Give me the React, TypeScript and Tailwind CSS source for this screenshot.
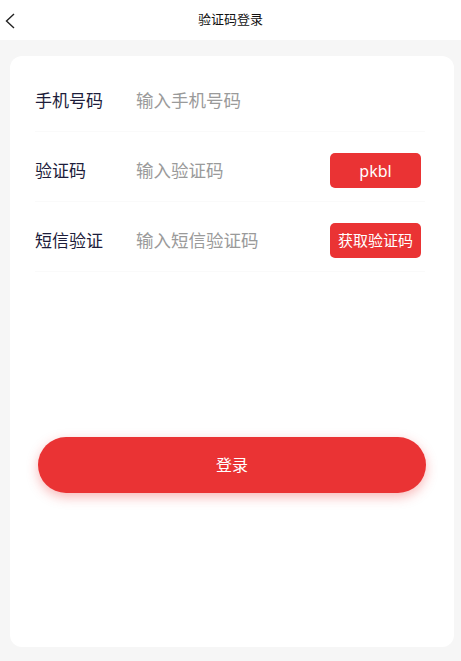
const font = { fontFamily: '"Noto Sans", "Noto Sans CJK SC", sans-serif' };

const Row = ({
  label,
  placeholder,
  action,
}: {
  label: string;
  placeholder: string;
  action?: React.ReactNode;
}) => (
  <div className="flex items-center h-[70px] pt-[8px] border-b border-[#fafafa]">
    <span className="w-[101px] shrink-0 text-[17px] text-[#1d1d3b]">{label}</span>
    <input
      className="flex-1 min-w-0 text-[17.5px] text-[#333] placeholder:text-[#9a9a9a] outline-none bg-transparent"
      placeholder={placeholder}
      style={font}
    />
    {action && <div className="pr-[4px]">{action}</div>}
  </div>
);

export default function App() {
  return (
    <div className="w-[461px] h-[661px] bg-[#f6f6f6] flex flex-col" style={font}>
      {/* Header */}
      <div className="relative h-[40px] bg-white flex items-center justify-center shrink-0">
        <svg className="absolute left-0 top-0" width="20" height="40" viewBox="0 0 20 40">
          <polyline points="14,14 6.5,21 14,28" fill="none" stroke="#222" strokeWidth="1.4" />
        </svg>
        <span className="text-[13px] text-[#111]">验证码登录</span>
      </div>

      {/* Card */}
      <div className="mt-[16px] ml-[10px] w-[444px] h-[591px] bg-white rounded-[12px] pt-[6px]">
        <div className="px-[25px] pr-[29px]">
          <Row label="手机号码" placeholder="输入手机号码" />
          <Row
            label="验证码"
            placeholder="输入验证码"
            action={
              <button className="w-[91px] h-[35px] rounded-[5px] bg-[#ea3334] text-white text-[16px]">
                pkbl
              </button>
            }
          />
          <Row
            label="短信验证"
            placeholder="输入短信验证码"
            action={
              <button className="w-[91px] h-[35px] rounded-[5px] bg-[#ea3334] text-white text-[15px]">
                获取验证码
              </button>
            }
          />
        </div>

        <div className="px-[28px] mt-[165px]">
          <button className="w-full h-[56px] rounded-full bg-[#ea3334] text-white text-[16px] shadow-[0_4px_12px_rgba(234,51,52,0.35)]">
            登录
          </button>
        </div>
      </div>
    </div>
  );
}
